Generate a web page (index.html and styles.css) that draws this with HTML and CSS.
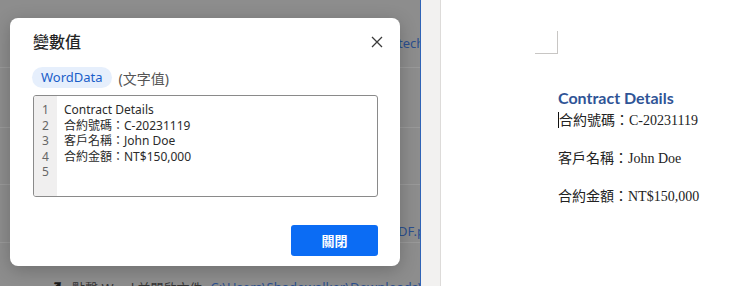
FILE: index.html
```html
<!doctype html>
<html lang="zh-Hant">
<head>
	<meta charset="utf-8">
	<title>變數值</title>
	<link rel="stylesheet" href="styles.css">
</head>
<body>

<div class="app">
	<div class="step step-first">
		<span class="step-link">techdoc_contract.docx</span>
	</div>
	<div class="step step-mid"></div>
	<div class="step step-mid2"></div>
	<div class="step step-pdf">
		<span class="step-link">DF.pdf</span>
	</div>
	<div class="step-last">
		<span class="arrow">&#8599;</span>
		<span class="last-label">點擊 Word 並開啟文件</span>
		<span class="last-link">C:\Users\Shadowalker\Downloads\1341188</span>
	</div>

	<!-- the dialog sits over the flow list -->
	<div class="modal">
		<div class="modal-head">
			<div class="modal-title">變數值</div>
			<button class="close" type="button">
				<svg width="12" height="12" viewBox="0 0 12 12"><path d="M1 1 L11 11 M11 1 L1 11" stroke="#3b3b3b" stroke-width="1.3" fill="none"/></svg>
			</button>
		</div>
		<div class="var-row">
			<span class="chip">WordData</span>
			<span class="var-type">(文字值)</span>
		</div>
		<div class="code">
			<div class="gutter">
				<div>1</div><div>2</div><div>3</div><div>4</div><div>5</div>
			</div>
			<div class="lines">
				<div>Contract Details</div>
				<div>合約號碼：C-20231119</div>
				<div>客戶名稱：John Doe</div>
				<div>合約金額：NT$150,000</div>
				<div>&nbsp;</div>
			</div>
		</div>
		<div class="modal-foot">
			<button class="btn-close" type="button">關閉</button>
		</div>
	</div>
</div>

<div class="ruler"></div>

<div class="page">
	<div class="corner"></div>
	<div class="doc">
		<h1>Contract Details</h1>
		<p><span class="caret"></span>合約號碼：C-20231119</p>
		<p>客戶名稱：John Doe</p>
		<p>合約金額：NT$150,000</p>
	</div>
</div>

</body>
</html>
```

FILE: styles.css
```css
html,body{
	margin: 0;
	padding: 0;
	height: 286px;
	overflow: hidden;
}
*{
	box-sizing: border-box;
}
body{
	display: flex;
	font-family: "Noto Sans", "Noto Sans CJK TC", sans-serif;
	background: #fff;
}

/* left side: the flow editor, greyed out under the dialog */
	.app{
		position: relative;
		width: 421px;
		flex: 0 0 421px;
		height: 286px;
		background: #8d8d8d;
		border-right: 1px solid #2f63b6;
		overflow: hidden;
	}
	.step{
		display: flex;
		padding-left: 398px;
		border-bottom: 1px solid #999;
		font-size: 13px;
		line-height: 18px;
		white-space: nowrap;
		overflow: hidden;
	}
	.step-first{
		height: 68px;
		padding-top: 34px;
	}
	.step-mid{
		height: 60px;
	}
	.step-mid2{
		height: 57px;
	}
	.step-pdf{
		height: 58px;
		padding-top: 37px;
	}
	.step-link{
		color: #2b4f8e;
	}
	.step-last{
		display: flex;
		align-items: center;
		gap: 8px;
		padding: 31px 0 0 46px;
		font-size: 13px;
		color: #333;
		white-space: nowrap;
	}
	.arrow{
		font-size: 18px;
		color: #1a1a1a;
		font-weight: 700;
	}
	.last-link{
		color: #2b4f8e;
	}

	.modal{
		position: absolute;
		left: 10px;
		top: 18px;
		width: 390px;
		height: 248px;
		background: #fff;
		border-radius: 8px;
		padding: 14px 22px 10px 23px;
		box-shadow: 0 4px 18px rgba(0,0,0,.22);
	}
	.modal-head{
		display: flex;
		align-items: center;
		justify-content: space-between;
		height: 20px;
	}
	.modal-title{
		font-size: 16px;
		font-weight: 500;
		color: #242424;
		line-height: 20px;
	}
	.close{
		width: 22px;
		height: 22px;
		margin-right: -10px;
		padding: 0;
		border: none;
		background: none;
		display: flex;
		align-items: center;
		justify-content: center;
	}
	.var-row{
		display: flex;
		align-items: center;
		gap: 7px;
		margin-top: 15px;
		margin-left: -1px;
	}
	.chip{
		display: inline-block;
		height: 21px;
		line-height: 21px;
		padding: 0 9px;
		border-radius: 11px;
		background: #e6effc;
		color: #1a5ec9;
		font-size: 13px;
	}
	.var-type{
		font-size: 14px;
		color: #555;
	}
	.code{
		display: flex;
		margin-top: 7px;
		height: 102px;
		border: 1px solid #8a8a8a;
		border-radius: 3px;
		overflow: hidden;
		font-size: 12px;
		line-height: 15.5px;
	}
	.gutter{
		width: 23px;
		background: #f0efef;
		color: #666;
		text-align: center;
		padding-top: 6px;
	}
	.lines{
		padding: 6px 0 0 7px;
		color: #2b2b2b;
	}
	.modal-foot{
		display: flex;
		justify-content: flex-end;
		margin-top: 28px;
	}
	.btn-close{
		width: 87px;
		height: 31px;
		border: none;
		border-radius: 3px;
		background: #0b6cf4;
		color: #fff;
		font-family: "Noto Sans CJK TC", sans-serif;
		font-size: 13px;
		font-weight: 700;
	}

/* right side: the word document */
	.ruler{
		flex: 0 0 20px;
		background: #f2f1f0;
		border-right: 1px solid #dddbd9;
	}
	.page{
		flex: 1;
		background: #fff;
		padding-top: 31px;
	}
	.corner{
		width: 23px;
		height: 23px;
		margin-left: 94px;
		border-right: 1px solid #c8c6c4;
		border-bottom: 1px solid #c8c6c4;
	}
	.doc{
		padding-left: 117px;
	}
	.doc h1{
		margin: 34px 0 0;
		font-family: Lato, "Noto Sans", sans-serif;
		font-size: 16px;
		font-weight: 700;
		line-height: 20px;
		color: #2f5496;
	}
	.doc p{
		margin: 3px 0 18px;
		font-family: "Liberation Serif", "Noto Sans CJK TC", serif;
		font-size: 14px;
		line-height: 20px;
		color: #222;
		white-space: nowrap;
	}
	.caret{
		display: inline-block;
		width: 0;
		height: 16px;
		border-left: 1px solid #111;
		vertical-align: -3px;
	}
```
